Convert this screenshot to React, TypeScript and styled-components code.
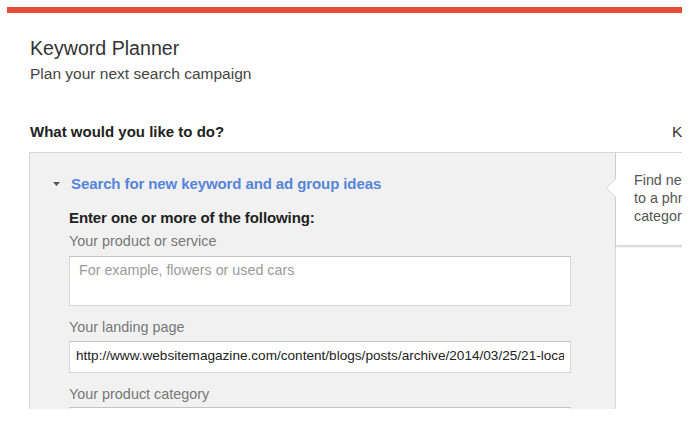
import React from 'react';
import styled, { createGlobalStyle } from 'styled-components';

const GlobalStyle = createGlobalStyle`
  html, body {
    margin: 0;
    padding: 0;
    background: #ffffff;
    font-family: "Liberation Sans", Arial, sans-serif;
  }
`;

// whole screenshot is cropped at x 682 / y 409
const Frame = styled.div`
  margin: 7px 0 0 7px;
  width: 675px;
  height: 402px;
  overflow: hidden;
  background: #ffffff;
`;

const RedBar = styled.div`
  height: 6px;
  background: #e84c3d;
`;

const Header = styled.header`
  padding: 24px 0 0 23px;
`;

const Title = styled.h1`
  margin: 0;
  font-size: 19.6px;
  line-height: 22px;
  font-weight: 400;
  color: #333333;
`;

const Subtitle = styled.p`
  margin: 6px 0 0;
  font-size: 15.5px;
  line-height: 18px;
  color: #444444;
`;

const Columns = styled.div`
  display: flex;
  align-items: flex-start;
  padding: 40px 0 0 22px;
`;

const MainColumn = styled.section`
  flex: 0 0 587px;
`;

const SideColumn = styled.aside`
  flex: 0 0 300px;
`;

const ColumnHeading = styled.h2<{ $bold?: boolean }>`
  margin: 0 0 11px;
  padding-left: ${(p) => (p.$bold ? '1px' : '56px')};
  font-size: ${(p) => (p.$bold ? '15px' : '15.5px')};
  font-weight: ${(p) => (p.$bold ? 700 : 400)};
  line-height: 18px;
  color: ${(p) => (p.$bold ? '#222222' : '#333333')};
  white-space: nowrap;
`;

const Panel = styled.div`
  background: #f1f1f1;
  border: 1px solid #d8d8d8;
  border-bottom: none;
  height: 300px;
  padding: 22px 0 0 23px;
  box-sizing: border-box;
`;

const ToggleLink = styled.a`
  display: flex;
  align-items: center;
  gap: 11px;
  font-size: 15px;
  font-weight: 700;
  line-height: 18px;
  letter-spacing: -0.1px;
  color: #5585db;
  text-decoration: none;
  cursor: pointer;
`;

const Form = styled.div`
  padding: 16px 0 0 16px;
  width: 502px;
`;

const FormHeading = styled.div`
  font-size: 15px;
  font-weight: 700;
  line-height: 18px;
  color: #222222;
  letter-spacing: -0.1px;
  margin-bottom: 5px;
`;

const Field = styled.div<{ $gap: number }>`
  display: flex;
  flex-direction: column;
  gap: ${(p) => p.$gap}px;
  & + & {
    margin-top: 12px;
  }
`;

const FieldLabel = styled.label`
  font-size: 14.4px;
  line-height: 18px;
  color: #777777;
`;

const TextArea = styled.textarea`
  box-sizing: border-box;
  width: 502px;
  height: 50px;
  margin: 0;
  padding: 4px 9px;
  resize: none;
  border: 1px solid #d6d6d6;
  border-top-color: #c4c4c4;
  border-radius: 0;
  background: #ffffff;
  font-family: "Liberation Sans", Arial, sans-serif;
  font-size: 14.3px;
  line-height: 18px;
  color: #222222;
  outline: none;
  &::placeholder {
    color: #9a9a9a;
  }
`;

const TextInput = styled.input`
  box-sizing: border-box;
  width: 502px;
  height: 32px;
  margin: 0;
  padding: 0 6px 4px;
  border: 1px solid #d6d6d6;
  border-top-color: #c4c4c4;
  border-radius: 0;
  background: #ffffff;
  font-family: "Liberation Sans", Arial, sans-serif;
  font-size: 13.6px;
  color: #222222;
  outline: none;
`;

const TipCard = styled.div`
  position: relative;
  background: #ffffff;
  border-top: 1px solid #d8d8d8;
  padding: 18px 0 20px 18px;
  box-shadow: 0 2px 2px rgba(0, 0, 0, 0.18);
  font-size: 14.3px;
  line-height: 18px;
  color: #555555;
  white-space: nowrap;

  /* pointer into the main panel */
  &::before,
  &::after {
    content: '';
    position: absolute;
    top: 25px;
    width: 0;
    height: 0;
    border-style: solid;
  }
  &::before {
    left: -10px;
    border-width: 10px 10px 10px 0;
    border-color: transparent #d4d4d4 transparent transparent;
  }
  &::after {
    left: -9px;
    border-width: 10px 10px 10px 0;
    border-color: transparent #ffffff transparent transparent;
  }
`;

const Caret = () => (
  <svg width="7" height="4" viewBox="0 0 7 4" aria-hidden="true">
    <path d="M0 0 H7 L3.5 4 Z" fill="#555555" />
  </svg>
);

const landingUrl =
  'http://www.websitemagazine.com/content/blogs/posts/archive/2014/03/25/21-loca';

export default function App() {
  return (
    <>
      <GlobalStyle />
      <Frame>
        <RedBar />
        <Header>
          <Title>Keyword Planner</Title>
          <Subtitle>Plan your next search campaign</Subtitle>
        </Header>
        <Columns>
          <MainColumn>
            <ColumnHeading $bold>What would you like to do?</ColumnHeading>
            <Panel>
              <ToggleLink>
                <Caret />
                Search for new keyword and ad group ideas
              </ToggleLink>
              <Form>
                <FormHeading>Enter one or more of the following:</FormHeading>
                <Field $gap={6}>
                  <FieldLabel>Your product or service</FieldLabel>
                  <TextArea readOnly placeholder="For example, flowers or used cars" />
                </Field>
                <Field $gap={5}>
                  <FieldLabel>Your landing page</FieldLabel>
                  <TextInput readOnly value={landingUrl} />
                </Field>
                <Field $gap={4}>
                  <FieldLabel>Your product category</FieldLabel>
                  <TextInput readOnly value="" />
                </Field>
              </Form>
            </Panel>
          </MainColumn>
          <SideColumn>
            <ColumnHeading>Keyword Planner tips</ColumnHeading>
            <TipCard>
              Find new keyword ideas related
              <br />
              to a phrase, website, or
              <br />
              category
            </TipCard>
          </SideColumn>
        </Columns>
      </Frame>
    </>
  );
}
